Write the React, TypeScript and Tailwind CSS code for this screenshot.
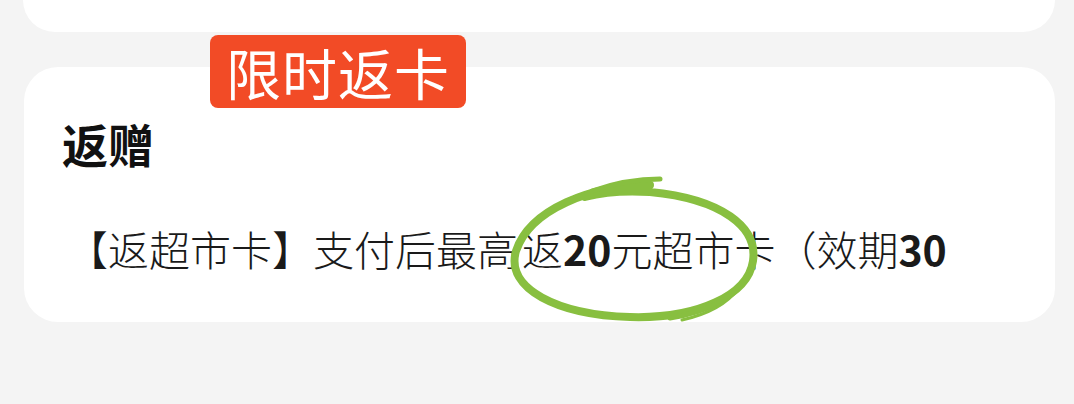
import React from 'react';

const FONT = '"Noto Sans CJK SC", "Noto Sans", sans-serif';

// 手绘圈
const Scribble: React.FC = () => (
  <svg
    className="absolute left-[500px] top-[165px] pointer-events-none"
    width="270"
    height="160"
    viewBox="0 0 270 160"
    fill="none"
  >
    <g stroke="#88bf40" strokeLinecap="round" strokeLinejoin="round">
      <path
        d="M150 20 C92 20 30 44 16 86 C5 124 58 150 130 152 C198 154 248 130 253 96 C258 62 222 34 150 27 C120 25 100 28 85 32"
        strokeWidth="8"
      />
      <path d="M92 26 C115 18 140 14 160 14" strokeWidth="5" />
      <path d="M248 110 C237 132 208 147 170 153" strokeWidth="5" />
      <path d="M238 124 C226 140 204 150 182 155" strokeWidth="3" />
    </g>
  </svg>
);

export default function App() {
  return (
    <div className="relative w-[1074px] h-[404px] overflow-hidden bg-[#f4f4f4]" style={{ fontFamily: FONT }}>
      {/* 上一张卡片 */}
      <div className="ml-[23px] w-[1032px] h-[32px] bg-white rounded-b-[34px]" />

      {/* 返赠卡片 */}
      <div className="ml-[24px] mt-[35px] w-[1031px] h-[255px] bg-white rounded-[34px] pl-[38px] pt-[50px]">
        <div className="text-[46px] leading-[52px] font-bold text-[#111]">返赠</div>
        <div className="mt-[55px] pl-[5px] text-[41px] leading-[48px] font-light text-[#1a1a1a] whitespace-nowrap">
          【返超市卡】支付后最高<span className="ml-[4px]">返</span>
          <span className="font-bold">20</span>元超市卡（效期<span className="font-bold">30</span>
        </div>
      </div>

      {/* 标签 */}
      <div className="absolute left-[210px] top-[35px] w-[256px] h-[73px] rounded-[8px] bg-[#f24b26] flex items-center justify-center text-white text-[55px] leading-none tracking-[1px]">
        限时返卡
      </div>

      <Scribble />
    </div>
  );
}
